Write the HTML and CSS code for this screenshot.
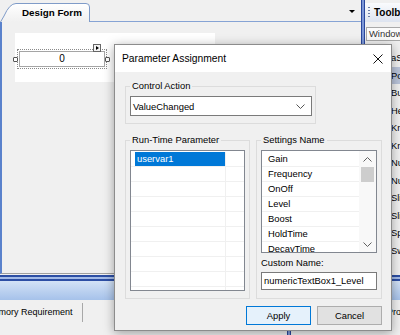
FILE: index.html
```html
<!DOCTYPE html>
<html lang="en">
<head>
    <meta charset="UTF-8">
    <title>Design Form - Parameter Assignment</title>
    <link rel="stylesheet" href="styles.css">
</head>
<body>
    <div class="ide">
        <div class="workspace">
            <div class="designer">
                <div class="doc-tabs">
                    <div class="doc-tab">
                        <svg class="doc-tab-shape" width="90" height="19" viewBox="0 0 90 19">
                            <defs>
                                <linearGradient id="tabFill" x1="0" y1="0" x2="0" y2="1">
                                    <stop offset="0" stop-color="#ffffff"/>
                                    <stop offset="1" stop-color="#f0f0f0"/>
                                </linearGradient>
                            </defs>
                            <path d="M0.5 19 L4 13 Q9.5 0.5 16 0.5 L86 0.5 Q89.5 0.5 89.5 4 L89.5 19" fill="url(#tabFill)" stroke="#7f9bc8"/>
                        </svg>
                        <span class="doc-tab-title">Design Form</span>
                    </div>
                    <div class="doc-tabs-rest"><span class="doc-menu"></span></div>
                </div>
                <div class="surface">
                    <div class="form">
                        <div class="selection">
                            <div class="numeric-box">0</div>
                            <span class="handle handle-left"></span>
                            <span class="handle handle-right"></span>
                            <span class="smart-tag">
                                <svg width="8" height="8" viewBox="0 0 8 8"><path d="M3 2 L6 4 L3 6 Z" fill="#000"/></svg>
                            </span>
                        </div>
                    </div>
                </div>
            </div>
            <div class="splitter"></div>
            <div class="toolbox">
                <div class="toolbox-head">
                    <span class="grip"></span>
                    <span class="toolbox-title">Toolbox</span>
                </div>
                <div class="toolbox-search">Windows</div>
                <div class="toolbox-list">
                    <div class="tool-item">aSignal</div>
                    <div class="tool-item selected">Pointer</div>
                    <div class="tool-item">Button</div>
                    <div class="tool-item">Help</div>
                    <div class="tool-item">Knob</div>
                    <div class="tool-item">Knob</div>
                    <div class="tool-item">Numeric</div>
                    <div class="tool-item">Numeric</div>
                    <div class="tool-item">Slider</div>
                    <div class="tool-item">Slider</div>
                    <div class="tool-item">Spin</div>
                    <div class="tool-item">Switch</div>
                </div>
            </div>
        </div>
        <div class="bottom">
            <div class="panel panel-left">
                <div class="panel-head"></div>
                <div class="panel-tabs">
                    <span class="panel-tab">Memory Requirement</span>
                </div>
            </div>
            <div class="splitter"></div>
            <div class="panel panel-right">
                <div class="panel-head"></div>
                <div class="panel-tabs">
                    <span class="panel-tab">Properties</span>
                </div>
            </div>
        </div>
    </div>

    <div class="dialog">
        <div class="dialog-title">
            <span>Parameter Assignment</span>
            <svg class="close" width="10" height="10" viewBox="0 0 10 10"><path d="M0.5 0.5 L9.5 9.5 M9.5 0.5 L0.5 9.5" stroke="#111" stroke-width="1"/></svg>
        </div>
        <div class="dialog-body">
            <fieldset class="group group-action">
                <legend>Control Action</legend>
                <div class="combo">
                    <span>ValueChanged</span>
                    <svg width="9" height="5" viewBox="0 0 9 5"><path d="M0.5 0.5 L4.5 4.5 L8.5 0.5" fill="none" stroke="#555"/></svg>
                </div>
            </fieldset>

            <div class="group-row">
                <fieldset class="group group-runtime">
                    <legend>Run-Time Parameter</legend>
                    <div class="grid-list">
                        <div class="grid-row"><span class="grid-cell"><span class="grid-item selected">uservar1</span></span></div>
                        <div class="grid-row"><span class="grid-cell"></span></div>
                        <div class="grid-row"><span class="grid-cell"></span></div>
                        <div class="grid-row"><span class="grid-cell"></span></div>
                        <div class="grid-row"><span class="grid-cell"></span></div>
                        <div class="grid-row"><span class="grid-cell"></span></div>
                        <div class="grid-row"><span class="grid-cell"></span></div>
                        <div class="grid-row"><span class="grid-cell"></span></div>
                        <div class="grid-row"><span class="grid-cell"></span></div>
                        <div class="grid-row"><span class="grid-cell"></span></div>
                    </div>
                </fieldset>

                <fieldset class="group group-settings">
                    <legend>Settings Name</legend>
                    <div class="settings-list">
                        <div class="settings-items">
                            <div class="settings-item">Gain</div>
                            <div class="settings-item">Frequency</div>
                            <div class="settings-item">OnOff</div>
                            <div class="settings-item">Level</div>
                            <div class="settings-item">Boost</div>
                            <div class="settings-item">HoldTime</div>
                            <div class="settings-item">DecayTime</div>
                        </div>
                        <div class="scrollbar">
                            <span class="scroll-btn">
                                <svg width="9" height="5" viewBox="0 0 9 5"><path d="M0.5 4.5 L4.5 0.5 L8.5 4.5" fill="none" stroke="#606060"/></svg>
                            </span>
                            <span class="scroll-track"><span class="scroll-thumb"></span></span>
                            <span class="scroll-btn">
                                <svg width="9" height="5" viewBox="0 0 9 5"><path d="M0.5 0.5 L4.5 4.5 L8.5 0.5" fill="none" stroke="#606060"/></svg>
                            </span>
                        </div>
                    </div>
                    <div class="field-label">Custom Name:</div>
                    <div class="textbox">numericTextBox1_Level</div>
                </fieldset>
            </div>

            <div class="buttons">
                <button class="btn btn-default">Apply</button>
                <button class="btn">Cancel</button>
            </div>
        </div>
    </div>
</body>
</html>
```

FILE: styles.css
```css
body {
    margin: 0;
    width: 400px;
    height: 335px;
    overflow: hidden;
    background: #f0f0f0;
    font-family: "Liberation Sans", Arial, sans-serif;
    font-size: 9.4px;
    color: #000;
    position: relative;
}

.ide {
    display: flex;
    flex-direction: column;
    height: 335px;
}

.workspace {
    display: flex;
    height: 274px;
}

/* Designer document */
.designer {
    width: 361px;
    display: flex;
    flex-direction: column;
}

.doc-tabs {
    display: flex;
    height: 22px;
    flex: none;
}

.doc-tab {
    position: relative;
    width: 90px;
    height: 19px;
    margin-top: 3px;
    display: flex;
    align-items: center;
}

.doc-tab-shape {
    position: absolute;
    left: 0;
    top: 0;
}

.doc-tab-title {
    position: relative;
    padding-left: 22px;
    font-weight: bold;
    font-size: 9.8px;
}

.doc-tabs-rest {
    flex: 1;
    border-bottom: 1px solid #86a3d4;
    display: flex;
    align-items: center;
    justify-content: flex-end;
    padding-right: 6px;
}

.doc-menu {
    width: 0;
    height: 0;
    border-left: 3px solid transparent;
    border-right: 3px solid transparent;
    border-top: 3px solid #000;
    margin-top: 1px;
}

.surface {
    flex: 1;
    border-left: 2px solid #5a82cc;
    border-bottom: 1px solid #a0a0a0;
    padding: 11px 0 0 13px;
    overflow: hidden;
}

.form {
    width: 200px;
    height: 49px;
    background: #fff;
    padding: 16px 0 0 2px;
    box-sizing: border-box;
}

.selection {
    position: relative;
    width: 90px;
    height: 20px;
    box-sizing: border-box;
    border: 1px dotted #8a8a8a;
    padding: 1px;
}

.numeric-box {
    height: 16px;
    box-sizing: border-box;
    border: 1px solid #a5a5a5;
    text-align: center;
    line-height: 14px;
    font-size: 10px;
}

.handle {
    position: absolute;
    top: 7px;
    width: 5px;
    height: 5px;
    box-sizing: border-box;
    border: 1px solid #555;
    background: #fff;
    border-radius: 1px;
}

.handle-left { left: -5px; }
.handle-right { left: 87px; }

.smart-tag {
    position: absolute;
    left: 75px;
    top: -6px;
    width: 8px;
    height: 8px;
    box-sizing: border-box;
    border: 1px solid #666;
    background: #f4f4f4;
    display: flex;
}

.smart-tag svg {
    margin: -1px;
}

.splitter {
    width: 4px;
    flex: none;
    background: linear-gradient(to right, #2a479c 0 1px, #7c97d6 1px 3px, #2a479c 3px);
}

/* Toolbox */
.toolbox {
    flex: 1;
    padding-top: 3px;
    overflow: hidden;
    white-space: nowrap;
}

.toolbox-head {
    height: 19px;
    display: flex;
    align-items: center;
    gap: 4px;
    padding-left: 3px;
    background: linear-gradient(#fafbfd, #dde4f0);
}

.grip {
    width: 2px;
    height: 12px;
    flex: none;
    background: repeating-linear-gradient(#6d7fa8 0 1px, transparent 1px 3px);
}

.toolbox-title {
    font-weight: bold;
    font-size: 10px;
}

.toolbox-search {
    height: 14px;
    margin: 5px 0 0 1px;
    box-sizing: border-box;
    border: 1px solid #a9a9a9;
    border-right: none;
    background: #fbfbfb;
    padding-left: 2px;
    line-height: 12px;
    color: #333;
}

.toolbox-list {
    margin-top: 8px;
}

.tool-item {
    height: 17.5px;
    line-height: 17.5px;
    padding-left: 26px;
}

.tool-item.selected {
    background: #b9c3d9;
}

/* Bottom panels */
.bottom {
    flex: 1;
    display: flex;
}

.panel {
    display: flex;
    flex-direction: column;
    overflow: hidden;
    white-space: nowrap;
}

.panel-left { width: 287px; }
.panel-right { flex: 1; }

.panel-head {
    height: 26px;
    background: linear-gradient(#f0f0f0 0 1px, #2c4ea4 1px 3px, #a3bbe8 3px 5px, #2c4ea4 5px 7px, #d3e2f6 7px, #a6c2ea);
}

.panel-tabs {
    flex: 1;
    display: flex;
    align-items: flex-start;
}

.panel-tab {
    height: 19px;
    line-height: 19px;
    margin-top: 3px;
    padding-right: 9px;
    border-right: 1px solid #a8a8a8;
    font-size: 9px;
}

.panel-left .panel-tab { margin-left: -14px; }
.panel-right .panel-tab { margin-left: 96px; }

/* Dialog */
.dialog {
    position: absolute;
    left: 114px;
    top: 44px;
    width: 278px;
    height: 287px;
    box-sizing: border-box;
    border: 1px solid #8c8c8c;
    background: #f0f0f0;
    box-shadow: 0 2px 10px rgba(0, 0, 0, 0.35);
    display: flex;
    flex-direction: column;
}

.dialog-title {
    height: 27px;
    flex: none;
    background: #fff;
    display: flex;
    align-items: center;
    justify-content: space-between;
    padding: 0 8px 0 7px;
    font-size: 10.3px;
}

.dialog-body {
    padding: 8px 9px 0 10px;
    display: flex;
    flex-direction: column;
}

.group {
    margin: 0;
    min-width: 0;
    border: 1px solid #dcdcdc;
    padding: 4px 3px 7px 4px;
}

.group legend {
    padding: 0 2px;
    line-height: 12px;
    height: 12px;
}

.group-action {
    width: 191px;
    box-sizing: border-box;
}

.combo {
    width: 182px;
    height: 20px;
    box-sizing: border-box;
    border: 1px solid #7a7a7a;
    background: #fff;
    display: flex;
    align-items: center;
    justify-content: space-between;
    padding: 0 6px 0 2px;
}

.group-row {
    display: flex;
    gap: 6px;
    margin-top: 10px;
}

.group-runtime {
    width: 126px;
    box-sizing: border-box;
}

.group-settings {
    width: 127px;
    box-sizing: border-box;
}

.grid-list {
    width: 115px;
    height: 141px;
    box-sizing: border-box;
    border: 1px solid #828790;
    background: #fff;
    padding-top: 1px;
    overflow: hidden;
}

.grid-row {
    height: 15px;
    box-sizing: border-box;
    border-bottom: 1px solid #f0f0f0;
    display: flex;
}

.grid-cell {
    width: 95px;
    border-right: 1px solid #f0f0f0;
    padding-left: 4px;
    box-sizing: border-box;
    display: flex;
}

.grid-item {
    flex: 1;
    padding-left: 2px;
    line-height: 14px;
}

.grid-item.selected {
    background: #0078d7;
    color: #fff;
}

.settings-list {
    width: 116px;
    height: 103px;
    box-sizing: border-box;
    border: 1px solid #828790;
    background: #fff;
    display: flex;
    overflow: hidden;
}

.settings-items {
    flex: 1;
    padding-top: 1px;
}

.settings-item {
    height: 15px;
    box-sizing: border-box;
    border-bottom: 1px solid #f0f0f0;
    line-height: 14px;
    padding-left: 6px;
}

.scrollbar {
    width: 17px;
    display: flex;
    flex-direction: column;
    background: #f8f8f8;
}

.scroll-btn {
    height: 16px;
    flex: none;
    display: flex;
    align-items: center;
    justify-content: center;
}

.scroll-track {
    flex: 1;
    padding: 0 2px;
}

.scroll-thumb {
    display: block;
    height: 15px;
    background: #cdcdcd;
}

.field-label {
    margin-top: 4px;
    line-height: 12px;
}

.textbox {
    width: 116px;
    height: 18px;
    margin-top: 3px;
    box-sizing: border-box;
    border: 1px solid #7a7a7a;
    background: #fff;
    line-height: 16px;
    padding-left: 2px;
    white-space: nowrap;
    overflow: hidden;
}

.buttons {
    display: flex;
    justify-content: flex-end;
    gap: 6px;
    margin-top: 7px;
}

.btn {
    width: 65px;
    height: 19px;
    padding: 0;
    font: inherit;
    color: #000;
    background: #e1e1e1;
    border: 1px solid #adadad;
}

.btn-default {
    background: #e5f1fb;
    border-color: #0078d7;
}
```
